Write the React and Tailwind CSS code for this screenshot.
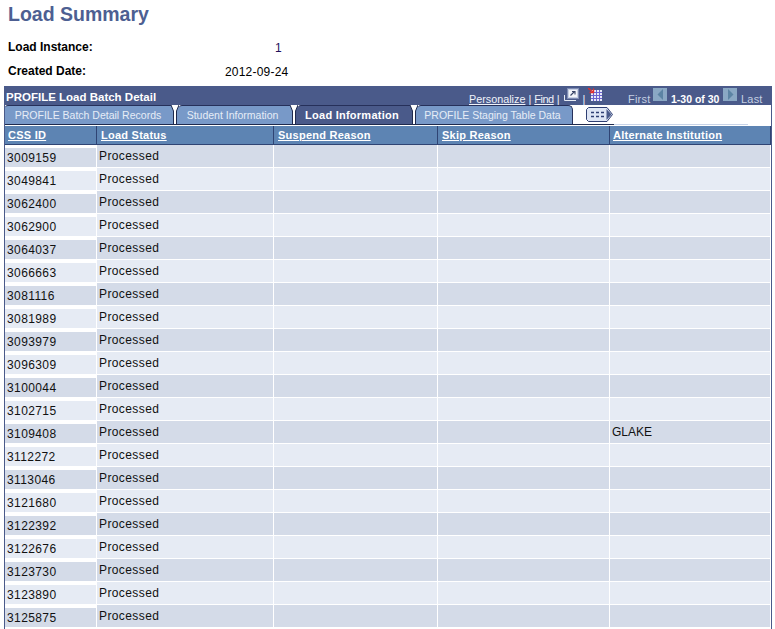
import React from "react";

const ids = [
  "3009159", "3049841", "3062400", "3062900", "3064037", "3066663", "3081116",
  "3081989", "3093979", "3096309", "3100044", "3102715", "3109408", "3112272",
  "3113046", "3121680", "3122392", "3122676", "3123730", "3123890", "3125875",
];

const columns = [
  { label: "CSS ID", width: "w-[92px]", pad: "pl-[3px]" },
  { label: "Load Status", width: "w-[177px]", pad: "pl-[4px]" },
  { label: "Suspend Reason", width: "w-[164px]", pad: "pl-[4px]" },
  { label: "Skip Reason", width: "w-[172px]", pad: "pl-[4px]" },
  { label: "Alternate Institution", width: "w-[161px]", pad: "pl-[3px]" },
];

const TAB_LIGHT = "#7899c8";
const TAB_DARK = "#4a5a8a";

function TabNotch({ left = TAB_LIGHT, right = TAB_LIGHT }) {
  return (
    <svg width="8" height="19" viewBox="0 0 8 19" className="shrink-0 block">
      <rect width="4" height="19" fill={left} />
      <rect x="4" width="4" height="19" fill={right} />
      <path d="M0 0H8L5.500 6V19H2.500V6Z" fill="#fff" />
      <path d="M0 0L2.500 6V19M8 0L5.500 6V19" fill="none" stroke="#1f2a4d" strokeWidth="1" />
    </svg>
  );
}

function Tab({ label, active, width, last, shift = "" }) {
  return (
    <div
      className={`${width} ${shift} h-[19px] pt-px flex items-center justify-center border-t border-[#26305a] ${
        last ? "rounded-tr-[5px] border-r" : ""
      } ${
        active
          ? "bg-[#4a5a8a] text-white font-bold text-[11px] tracking-[0.25px]"
          : "bg-[#7899c8] text-[#e6edf7] text-[10.5px]"
      } rounded-tl-[3px]`}
    >
      {label}
    </div>
  );
}

function PageButton({ left }) {
  return (
    <span className="w-[14px] h-[13px] bg-[#8aa8c4] flex items-center justify-center">
      <svg width="7" height="11" viewBox="0 0 7 11">
        <path d={left ? "M6 0V11L0.500 5.500Z" : "M1 0V11L6.500 5.500Z"} fill="#5c84a4" />
      </svg>
    </span>
  );
}

function ZoomIcon() {
  return (
    <svg width="15" height="13" viewBox="0 0 15 13" className="block">
      <path d="M0.500 7V12.500H12" fill="none" stroke="#e6ebf4" />
      <rect x="3.500" y="0.500" width="11" height="10" fill="#c9d2e4" stroke="#7f8cb4" />
      <rect x="5" y="2" width="8" height="7" fill="#f3f5fa" />
      <path d="M6.500 7.500L10.500 3.500M8 3.500H11V6.500" fill="none" stroke="#3a4668" strokeWidth="1.100" />
    </svg>
  );
}

function GridIcon() {
  return (
    <svg width="14" height="13" viewBox="0 0 14 13" className="block">
      <rect x="3" y="2" width="11" height="11" fill="#e6e8f8" />
      <path d="M5.500 2V13M8.500 2V13M11.500 2V13M3 4.500H14M3 7.500H14M3 10.500H14" stroke="#6a62d0" strokeWidth="1" />
      <path d="M0 0L5 4M5.500 0.500V4.500H1.500" fill="none" stroke="#e03030" strokeWidth="1.400" />
    </svg>
  );
}

function ShowAllTabs() {
  return (
    <svg width="27" height="15" viewBox="0 0 27 15" className="block">
      <path d="M2.500 0.500H21L26.500 7.500L21 14.500H2.500L0.500 12.500V2.500Z" fill="#dfe6f5" stroke="#2f3f73" />
      <path d="M20.500 2L25.500 7.500L20.500 13Z" fill="#4a5a8a" />
      <path d="M5 5.500H8M10 5.500H13M15 5.500H18M5 9.500H8M10 9.500H13M15 9.500H18" stroke="#2f3f73" strokeWidth="1.500" />
    </svg>
  );
}

export default function App() {
  return (
    <div className="w-[775px] h-[629px] overflow-hidden bg-white font-['Liberation_Sans',Arial,sans-serif] text-black">
      <h1 className="pl-2 pt-[3px] h-[38px] text-[19.5px] leading-[23px] font-bold text-[#4d5f92]">
        Load Summary
      </h1>
      <div className="h-[24px] pt-[2px] flex items-start text-[12px] leading-[14px]">
        <span className="pl-2 w-[275px] font-bold">Load Instance:</span>
        <span className="pt-px text-[#22105a]">1</span>
      </div>
      <div className="h-[24px] pt-[2px] flex items-start text-[12px] leading-[14px]">
        <span className="pl-2 w-[225px] font-bold">Created Date:</span>
        <span className="pt-px tracking-[0.2px]">2012-09-24</span>
      </div>

      <div className="mx-[4px] w-[768px] h-[543px] border-x border-[#4a5a8a] bg-white overflow-hidden">
        <div className="h-[19px] bg-[#4a5a8a] flex items-start text-white text-[11px] leading-[14px] -mx-px whitespace-nowrap">
          <span className="pl-[2px] w-[465px] shrink-0 font-bold text-[11.5px] pt-[4px]">PROFILE Load Batch Detail</span>
          <span className="flex items-start gap-[3px] w-[159px] shrink-0 pt-[6px] text-[#f0f3fa]">
            <span className="underline text-[10.8px]">Personalize</span>
            <span>|</span>
            <span className="underline tracking-[-0.5px]">Find</span>
            <span>|</span>
            <span className="-mt-[4px] ml-px"><ZoomIcon /></span>
            <span className="ml-px">|</span>
            <span className="-mt-[4px]"><GridIcon /></span>
          </span>
          <span className="flex items-start shrink-0 pt-[6px] text-[#c5cfe2] tracking-[0.2px]">
            <span className="w-[25px]">First</span>
            <span className="-mt-[4px]"><PageButton left /></span>
            <span className="ml-[4px] w-[52px] font-bold text-white text-[10.5px] tracking-normal">1-30 of 30</span>
            <span className="-mt-[4px]"><PageButton /></span>
            <span className="ml-[4px]">Last</span>
          </span>
        </div>

        <div className="h-[19px] flex items-start bg-white">
          <Tab label="PROFILE Batch Detail Records" width="w-[166px]" />
          <TabNotch />
          <Tab label="Student Information" width="w-[111px]" shift="pr-[4px]" />
          <TabNotch right={TAB_DARK} />
          <Tab label="Load Information" width="w-[112px]" shift="pr-[4px]" active />
          <TabNotch left={TAB_DARK} />
          <Tab label="PROFILE Staging Table Data" width="w-[155px]" shift="pr-[5px]" last />
          <div className="ml-[13px] mt-[2px]">
            <ShowAllTabs />
          </div>
        </div>
        <div className="h-px flex">
          <div className="w-[609px] bg-[#1f2a4d]" />
          <div className="w-[134px] bg-[#c8d4e8]" />
        </div>
        <div className="h-px bg-white" />

        <div className="flex h-[19px] bg-[#5d84b3] border-b border-[#2f4474] text-white text-[11px] font-bold tracking-[0.25px]">
          {columns.map((col) => (
            <div key={col.label} className={`${col.width} ${col.pad} shrink-0 leading-[18px] border-r border-[#2f4474] underline`}>
              {col.label}
            </div>
          ))}
        </div>

        {ids.map((id, i) => {
          const shade = i % 2 === 0 ? "bg-[#d4dbe8]" : "bg-[#e6ebf4]";
          return (
            <div key={id} className="flex h-[23px] text-[12px] leading-[14px] text-[#111] tracking-[0.4px]">
              <div className="w-[92px] shrink-0 pt-[3px] pb-px pr-px">
                <div className={`${shade} h-[19px] pl-[2px] pt-[3px]`}>{id}</div>
              </div>
              {columns.slice(1).map((col, c) => (
                <div key={col.label} className={`${col.width} shrink-0 pb-px border-r border-white`}>
                  <div className={`${shade} h-[22px] pl-[2px] pt-[4px]`}>
                    {c === 0 && "Processed"}
                    {c === 3 && id === "3109408" && <span className="tracking-normal">GLAKE</span>}
                  </div>
                </div>
              ))}
            </div>
          );
        })}
      </div>
    </div>
  );
}
